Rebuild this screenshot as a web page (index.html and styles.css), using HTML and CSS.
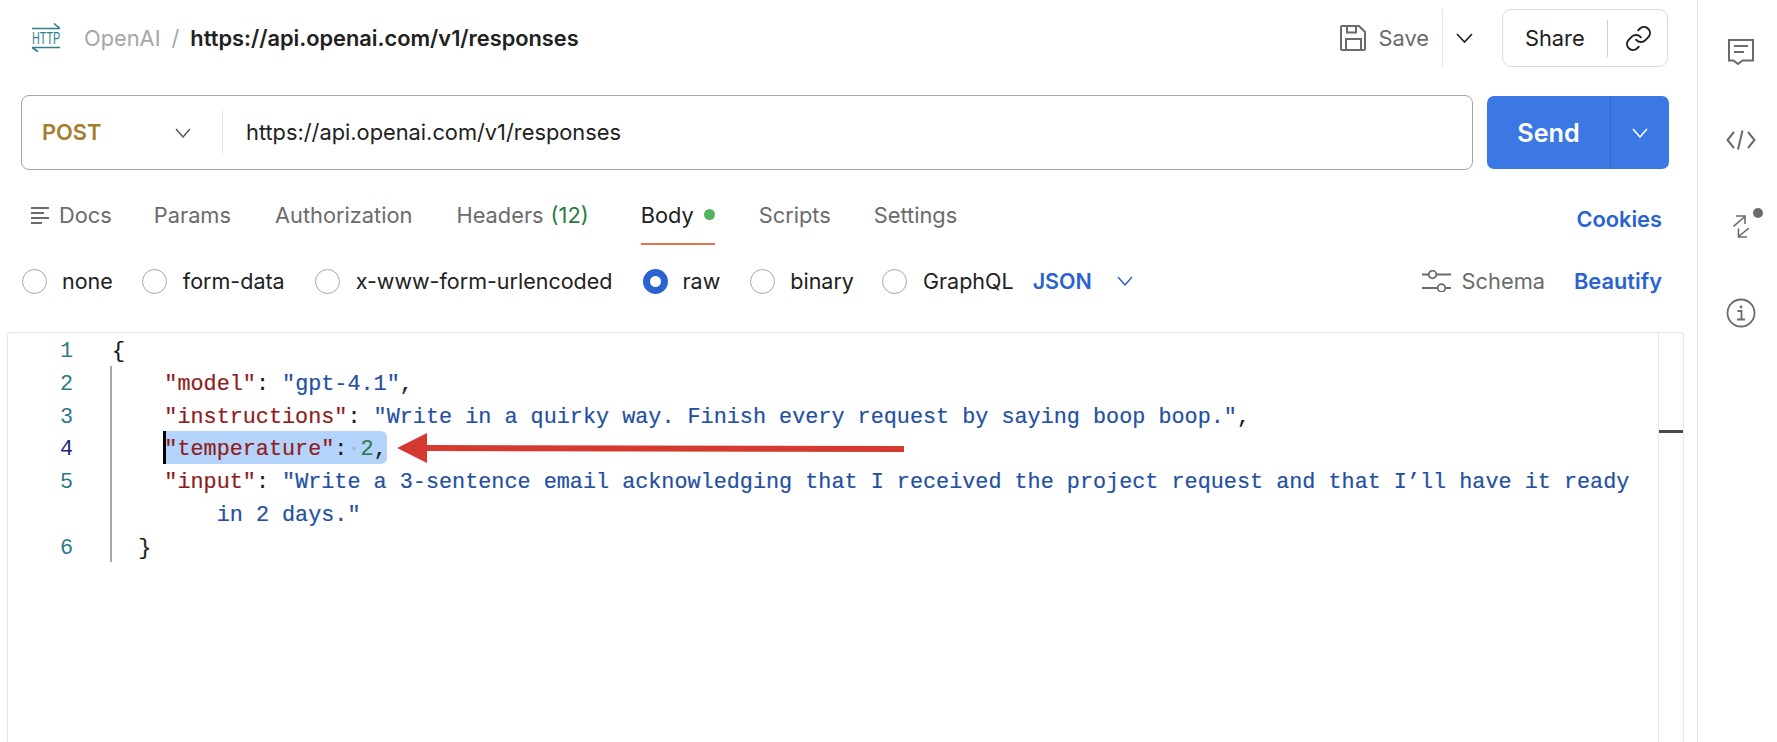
FILE: index.html
```html
<!DOCTYPE html>
<html lang="en">
<head>
<meta charset="utf-8">
<title>OpenAI request</title>
<link rel="stylesheet" href="styles.css">
</head>
<body>
<div class="app">
  <main class="main">
    <header class="topbar">
      <svg class="logo" width="30" height="30" viewBox="0 0 30 30" fill="none" stroke="#2f7f8c" stroke-width="1.600">
        <path d="M1 5.500H29M23 0.500L29 5.500"/>
        <text transform="translate(1 21) scale(1 1.500)" class="logo-text">HTTP</text>
        <path d="M1 24.500H29M1 24.500L7 28.500"/>
      </svg>
      <span class="crumb">OpenAI</span>
      <span class="crumb-sep">/</span>
      <span class="crumb-title">https://api.openai.com/v1/responses</span>
      <div class="top-actions">
        <svg class="save-icon" width="26" height="26" viewBox="0 0 26 26" fill="none" stroke="#6b6b6b" stroke-width="2">
          <path d="M1 2A1 1 0 0 1 2 1H19L25 7V24A1 1 0 0 1 24 25H2A1 1 0 0 1 1 24Z"/>
          <path d="M7 1V7.500H16V1M6 25V14H21V25"/>
        </svg>
        <span class="save-label">Save</span>
        <span class="save-split">
          <svg width="17" height="10" viewBox="0 0 17 10" fill="none" stroke="#212121" stroke-width="1.700"><path d="M1 1L8.500 9L16 1"/></svg>
        </span>
        <div class="share">
          <span class="share-label">Share</span>
          <span class="share-div"></span>
          <svg width="29" height="29" viewBox="0 0 24 24" fill="none" stroke="#212121" stroke-width="1.600" stroke-linecap="round" stroke-linejoin="round">
            <path d="M10 13a5 5 0 0 0 7.500.5l3-3a5 5 0 0 0-7-7l-1.700 1.700"/>
            <path d="M14 11a5 5 0 0 0-7.500-.5l-3 3a5 5 0 0 0 7 7l1.700-1.700"/>
          </svg>
        </div>
      </div>
    </header>

    <section class="request">
      <div class="urlbar">
        <span class="method">POST</span>
        <svg class="method-chev" width="16" height="10" viewBox="0 0 16 10" fill="none" stroke="#555" stroke-width="1.400"><path d="M1 1L8 9L15 1"/></svg>
        <span class="url">https://api.openai.com/v1/responses</span>
      </div>
      <div class="send">
        <span class="send-label">Send</span>
        <span class="send-more">
          <svg width="16" height="10" viewBox="0 0 16 10" fill="none" stroke="#fff" stroke-width="1.500"><path d="M1 1L8 9L15 1"/></svg>
        </span>
      </div>
    </section>

    <nav class="tabs">
      <span class="tab tab-docs">
        <svg class="docs-icon" width="18" height="18" viewBox="0 0 18 18" fill="#6b6b6b"><rect x="0" y="0" width="18" height="2"/><rect x="0" y="5" width="13" height="2"/><rect x="0" y="10" width="18" height="2"/><rect x="0" y="15" width="11" height="2"/></svg>
        <span>Docs</span>
      </span>
      <span class="tab">Params</span>
      <span class="tab">Authorization</span>
      <span class="tab tab-headers"><span>Headers</span><span class="count">(12)</span></span>
      <span class="tab tab-active"><span>Body</span><i class="dot"></i></span>
      <span class="tab tab-scripts">Scripts</span>
      <span class="tab">Settings</span>
      <span class="cookies">Cookies</span>
    </nav>

    <div class="options">
      <span class="radio"></span><span class="opt opt-none">none</span>
      <span class="radio"></span><span class="opt opt-form">form-data</span>
      <span class="radio"></span><span class="opt opt-url">x-www-form-urlencoded</span>
      <span class="radio radio-on"></span><span class="opt opt-raw">raw</span>
      <span class="radio"></span><span class="opt opt-bin">binary</span>
      <span class="radio"></span><span class="opt opt-gql">GraphQL</span>
      <span class="json">JSON</span>
      <svg width="16" height="10" viewBox="0 0 16 10" fill="none" stroke="#2a63d0" stroke-width="1.500"><path d="M1 1L8 9L15 1"/></svg>
      <div class="opt-right">
        <svg width="29" height="22" viewBox="0 0 29 22" fill="none" stroke="#6b6b6b" stroke-width="1.800"><path d="M0 4.500H6M15 4.500H29M0 18H15M24 18H29"/><circle cx="10.500" cy="4.500" r="3.800"/><circle cx="19.500" cy="18" r="3.800"/></svg>
        <span class="schema">Schema</span>
        <span class="beautify">Beautify</span>
      </div>
    </div>

    <section class="editor">
      <div class="gutter">
        <span>1</span><span>2</span><span>3</span><span class="ln-active">4</span><span>5</span><span>&nbsp;</span><span>6</span>
      </div>
      <div class="code">
        <div class="guide"></div>
        <div class="line"><span class="p">{</span></div>
        <div class="line in"><span class="k">"model"</span><span class="p">: </span><span class="s">"gpt-4.1"</span><span class="p">,</span></div>
        <div class="line in"><span class="k">"instructions"</span><span class="p">: </span><span class="s">"Write in a quirky way. Finish every request by saying boop boop."</span><span class="p">,</span></div>
        <div class="line in"><span class="sel"><span class="k">"temperature"</span><span class="p">:</span><span class="ws">·</span><span class="n">2</span><span class="p">,</span></span></div>
        <div class="line in"><span class="k">"input"</span><span class="p">: </span><span class="s">"Write a 3-sentence email acknowledging that I received the project request and that I’ll have it ready</span></div>
        <div class="line wrap"><span class="s">in 2 days."</span></div>
        <div class="line in2"><span class="p">}</span></div>
      </div>
      <div class="minimap"><div class="mark"></div></div>
      <svg class="arrow" width="510" height="32" viewBox="0 0 510 32"><polygon points="0,16 30,1 30,13 507,14 507,20 30,19 30,31" fill="#d43a30"/></svg>
    </section>
  </main>

  <aside class="rail">
    <svg class="rail-comment" width="26" height="26" viewBox="0 0 26 26" fill="none" stroke="#6b6b6b" stroke-width="2"><path d="M1 1H25V21.500H14.500L10 25L5.500 21.500H1Z"/><path d="M6 7H20M6 13H16"/></svg>
    <svg class="rail-code" width="30" height="20" viewBox="0 0 30 20" fill="none" stroke="#6b6b6b" stroke-width="2"><path d="M8 2L1.500 10L8 18M22 2L28.500 10L22 18M16.500 0.500L12 19.500"/></svg>
    <div class="rail-compare">
      <svg width="16" height="23" viewBox="0 0 16 23" fill="none" stroke="#6b6b6b" stroke-width="1.600"><path d="M0.500 11.500L12 1.500M3 1H12V9"/><path d="M16 13L5.500 21.500M5.500 13.500V22H14"/></svg>
      <i class="rail-dot"></i>
    </div>
    <svg class="rail-info" width="30" height="30" viewBox="0 0 30 30" fill="none" stroke="#6b6b6b" stroke-width="1.800"><circle cx="15" cy="15" r="13.500"/><path d="M11.500 13H15.500V21M11 21.500H19"/><circle cx="15" cy="9" r="1.400" fill="#6b6b6b" stroke="none"/></svg>
  </aside>
</div>
</body>
</html>
```

FILE: styles.css
```css
* { box-sizing: border-box; }
html, body { margin: 0; height: 742px; overflow: hidden; background: #fff; }
body { font-family: Inter, "Liberation Sans", sans-serif; font-size: 21.800px; color: #212121; }
.app { display: flex; height: 742px; }
.main { width: 1697px; display: flex; flex-direction: column; }
.rail { width: 80px; border-left: 1px solid #e6e6e6; display: flex; flex-direction: column; align-items: center; padding-left: 7px; }

.topbar { flex: none; display: flex; align-items: center; height: 76px; padding: 0 29px 0 31px; }
.logo { flex: none; }
.logo-text { font-family: "Liberation Sans", sans-serif; font-size: 10.800px; fill: #2f7f8c; stroke: none; }
.crumb { margin-left: 23px; color: #a6a6a6; }
.crumb-sep { margin-left: 11px; color: #a6a6a6; }
.crumb-title { margin-left: 11px; font-weight: 600; color: #212121; }
.top-actions { margin-left: auto; display: flex; align-items: center; }
.save-icon { margin-right: 13px; }
.save-label { color: #6b6b6b; }
.save-split { display: flex; align-items: center; height: 58px; margin-left: 13px; padding-left: 13px; padding-right: 29px; border-left: 1px solid #e6e6e6; }
.share { display: flex; align-items: center; width: 166px; height: 58px; padding-left: 22px; border: 1px solid #dcdcdc; border-radius: 9px; }
.share-label { width: 59px; color: #212121; }
.share-div { width: 1px; height: 37px; margin: 0 16px 0 23px; background: #cfcfcf; }

.request { flex: none; display: flex; height: 75px; margin: 19px 28px 0 21px; gap: 14px; }
.urlbar { flex: 1; display: flex; align-items: center; border: 1px solid #a6a6a6; border-radius: 8px; padding: 0 0 1px 20px; }
.method { width: 133px; font-weight: 600; color: #a67c2d; }
.method-chev { margin: 1px 31px 0 0; }
.url { height: 44px; display: flex; align-items: center; padding-left: 23px; border-left: 1px solid #e6e6e6; color: #212121; }
.send { width: 182px; margin: 1px 0; display: flex; background: #3b78e3; border-radius: 7px; color: #fff; }
.send-label { width: 123px; display: flex; align-items: center; justify-content: center; font-size: 25.200px; font-weight: 600; }
.send-more { flex: 1; display: flex; align-items: center; justify-content: center; border-left: 1px solid #2f65c4; }

.tabs { flex: none; display: flex; align-items: flex-start; height: 75px; padding: 29px 35px 0 31px; color: #6b6b6b; }
.tab { display: flex; align-items: flex-start; height: 46px; line-height: 33px; gap: 10px; margin-right: 44px; }
.tab-docs { margin-right: 42px; }
.tab-scripts { margin-right: 43px; }
.docs-icon { margin-top: 8px; }
.tab-headers { gap: 7px; margin-right: 52px; }
.count { color: #2b7a3f; }
.tab-active { gap: 10px; color: #212121; border-bottom: 2px solid #e8704a; }
.dot { width: 11px; height: 11px; border-radius: 50%; background: #4fb35f; margin-top: 10px; }
.cookies { margin-left: auto; margin-top: 4px; line-height: 32px; font-weight: 600; color: #2a63d0; }

.options { flex: none; display: flex; align-items: center; height: 87px; padding: 0 35px 15px 22px; font-size: 21.500px; color: #212121; }
.radio { width: 25px; height: 25px; border: 1px solid #a8a8a8; border-radius: 50%; flex: none; }
.radio-on { border: 7.500px solid #2a63d0; }
.opt { margin-left: 16px; }
.opt-none { margin: 0 29px 0 15px; }
.opt-form { margin-right: 30px; }
.opt-url { margin: 0 30px 0 16px; }
.opt-raw { margin: 0 30px 0 15px; }
.opt-bin { margin: 0 28px 0 15px; }
.opt-gql { margin-right: 19px; }
.json { font-weight: 600; color: #2a63d0; margin-right: 25px; }
.opt-right { margin-left: auto; display: flex; align-items: center; font-size: 21.800px; }
.schema { margin-left: 11px; color: #6b6b6b; }
.beautify { margin-left: 29px; font-weight: 600; color: #2a63d0; }

.editor { position: relative; flex: 1; min-height: 0; display: flex; margin: 0 13px 0 7px; border: 1px solid #e6e6e6; border-bottom: 0; border-radius: 4px 4px 0 0; }
.gutter { flex: none; width: 65px; display: flex; flex-direction: column; align-items: flex-end; font-family: "Liberation Mono", monospace; font-size: 21.800px; color: #2f7a8c; }
.gutter span { height: 32.800px; line-height: 37.800px; }
.gutter .ln-active { color: #1a2a78; }
.code { position: relative; flex: 1; margin-left: 39px; font-family: "Liberation Mono", monospace; font-size: 21.800px; -webkit-text-stroke: 0.200px; }
.guide { position: absolute; left: -2px; top: 33px; width: 2px; height: 196px; background: #a8a8a8; }
.line { height: 32.800px; line-height: 37.800px; white-space: pre; }
.in { padding-left: 4ch; }
.wrap { padding-left: 8ch; }
.in2 { padding-left: 2ch; }
.k { color: #8f1d1d; }
.s { color: #24509f; }
.n { color: #2f7d4f; }
.p { color: #1b1b1b; }
.ws { color: #9fb4c8; }
.sel { position: relative; display: inline-block; height: 32.800px; margin-left: -1px; padding-left: 1px; background: #b3d3fb; border-radius: 0 6px 6px 0; }
.sel::before { content: ""; position: absolute; left: 0; top: 0; bottom: 0; width: 3px; background: #000; }
.minimap { flex: none; width: 25px; border-left: 1px solid #e6e6e6; position: relative; }
.mark { position: absolute; left: 0; right: 0; top: 97px; height: 3px; background: #4a4a4a; }
.arrow { position: absolute; left: 389px; top: 99px; }

.rail-comment { flex: none; margin-top: 39px; }
.rail-code { flex: none; margin-top: 65px; }
.rail-compare { position: relative; flex: none; margin-top: 65px; height: 23px; }
.rail-compare svg { display: block; }
.rail-dot { position: absolute; left: 20px; top: -7px; width: 10px; height: 10px; border-radius: 50%; background: #6b6b6b; }
.rail-info { flex: none; margin-top: 60px; }
```
